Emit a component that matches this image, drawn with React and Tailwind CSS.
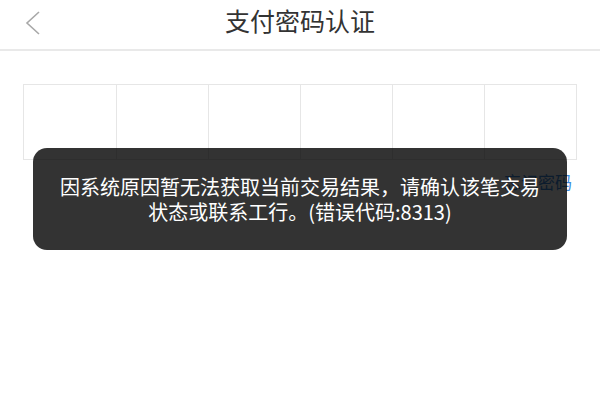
import React from "react";

export default function App() {
  const font = { fontFamily: '"Noto Sans CJK SC", "Noto Sans", sans-serif' };
  return (
    <div className="relative w-[600px] h-[400px] bg-white overflow-hidden" style={font}>
      {/* Header */}
      <div className="relative h-[51px] border-b-2 border-[#e9e9e9] flex justify-center">
        <svg
          className="absolute left-[24px] top-[11px]"
          width="18"
          height="24"
          viewBox="0 0 18 24"
          fill="none"
        >
          <polyline points="15,1 3,12 15,23" stroke="#a8a8a8" strokeWidth="1.6" fill="none" />
        </svg>
        <div className="pt-[4px] text-[25px] leading-[32px] text-[#333333]">支付密码认证</div>
      </div>

      {/* Password boxes */}
      <div className="mx-[23px] mt-[33px] h-[76px] border border-[#e6e6e6] grid grid-cols-6">
        <div />
        <div className="border-l border-[#e6e6e6]" />
        <div className="border-l border-[#e6e6e6]" />
        <div className="border-l border-[#e6e6e6]" />
        <div className="border-l border-[#e6e6e6]" />
        <div className="border-l border-[#e6e6e6]" />
      </div>

      {/* Forgot password link */}
      <div className="flex justify-end pr-[28px] mt-[10px]">
        <span className="text-[17px] leading-[24px] text-[#3d8be0]">忘记密码</span>
      </div>

      {/* Toast overlay */}
      <div className="absolute left-[33px] top-[148px] w-[534px] h-[102px] rounded-[14px] bg-black/80 flex flex-col items-center justify-center text-white text-[20px] leading-[25px] text-center">
        <div>因系统原因暂无法获取当前交易结果，请确认该笔交易</div>
        <div>状态或联系工行。(错误代码:8313)</div>
      </div>
    </div>
  );
}
